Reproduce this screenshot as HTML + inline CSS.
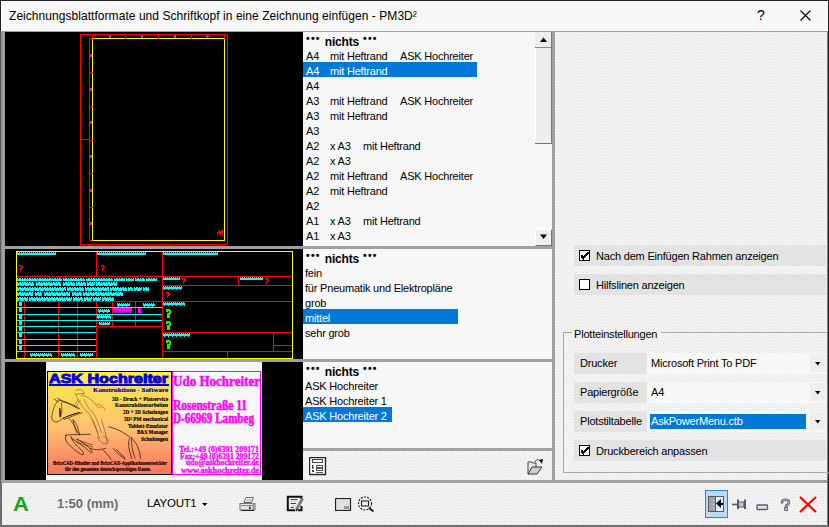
<!DOCTYPE html>
<html><head><meta charset="utf-8"><style>
*{box-sizing:border-box}
html,body{margin:0;padding:0;width:829px;height:527px;overflow:hidden;background:#1e1e1e;font-family:"Liberation Sans", sans-serif;}
.a{position:absolute}
.it{position:absolute;left:0;height:15px;width:240px;font-size:11px;line-height:15px;color:#000;white-space:pre;letter-spacing:-0.2px}
.it > span{top:2px!important}
.it > span.bd{top:3px!important}
.band{position:absolute;background:#e3e3e3;font-size:11px;line-height:21px;color:#000;white-space:pre;letter-spacing:-0.2px}
.lb{position:absolute;font-size:11px;line-height:15px;white-space:pre;letter-spacing:-0.2px;color:#000}
</style></head><body>
<div class="a" style="left:1px;top:1px;width:827px;height:30px;background:#f7f7f7"></div>
<div class="a" style="left:9px;top:8px;font-size:12px;line-height:16px;color:#000;white-space:pre;letter-spacing:0.05px">Zeichnungsblattformate und Schriftkopf in eine Zeichnung einfügen - PM3D²</div>
<div class="a" style="left:757px;top:7px;font-size:14px;line-height:16px;color:#000">?</div>
<svg class="a" style="left:800px;top:10px" width="11" height="11"><path d="M0.5 0.5 L10.5 10.5 M10.5 0.5 L0.5 10.5" stroke="#000" stroke-width="1.1"/></svg>
<div class="a" style="left:1px;top:31px;width:827px;height:1px;background:#a0a0a0"></div>
<svg class="a" style="left:1px;top:32px" width="826" height="495" shape-rendering="crispEdges"><defs><pattern id="tex" width="3" height="3" patternUnits="userSpaceOnUse"><rect width="3" height="3" fill="#f8f8f8"/><rect x="0" y="0" width="1" height="1" fill="#e6e6e6"/><rect x="1" y="1" width="1" height="1" fill="#e6e6e6"/><rect x="2" y="2" width="1" height="1" fill="#e6e6e6"/><rect x="2" y="0" width="1" height="1" fill="#f8e8ef"/><rect x="0" y="2" width="1" height="1" fill="#ecf6ec"/></pattern></defs><rect width="826" height="495" fill="url(#tex)"/></svg>
<div class="a" style="left:827px;top:31px;width:1px;height:496px;background:#808080"></div>
<!-- left frame -->
<div class="a" style="left:1px;top:32px;width:4px;height:451px;background:#a0a0a0"></div>
<div class="a" style="left:1px;top:32px;width:1px;height:451px;background:#8a8a8a"></div>
<div class="a" style="left:5px;top:32px;width:298px;height:448px;background:#000"></div>
<div class="a" style="left:303px;top:32px;width:249px;height:214px;background:#f7f7f7"></div>
<div class="a" style="left:303px;top:249px;width:249px;height:110px;background:#f7f7f7"></div>
<div class="a" style="left:303px;top:362px;width:249px;height:86px;background:#f7f7f7"></div>
<div class="a" style="left:303px;top:448px;width:249px;height:3px;background:#a0a0a0"></div>
<div class="a" style="left:1px;top:246px;width:554px;height:3px;background:#a0a0a0"></div>
<div class="a" style="left:1px;top:359px;width:554px;height:3px;background:#a0a0a0"></div>
<div class="a" style="left:1px;top:480px;width:826px;height:3px;background:#a0a0a0"></div>
<div class="a" style="left:552px;top:32px;width:3px;height:451px;background:#a0a0a0"></div>
<svg width="829" height="527" style="position:absolute;left:0;top:0" shape-rendering="crispEdges"><rect x="80" y="34" width="148" height="1" fill="#ff0000"/><rect x="80" y="244" width="148" height="1" fill="#ff0000"/><rect x="80" y="34" width="1" height="211" fill="#ff0000"/><rect x="227" y="34" width="1" height="211" fill="#ff0000"/><rect x="89" y="38" width="1" height="203" fill="#ff0000"/><rect x="89" y="38" width="4" height="1" fill="#ff0000"/><rect x="89" y="240" width="4" height="1" fill="#ff0000"/><rect x="92" y="38" width="133" height="1" fill="#ffff00"/><rect x="92" y="240" width="133" height="1" fill="#ffff00"/><rect x="92" y="38" width="1" height="203" fill="#ffff00"/><rect x="224" y="38" width="1" height="203" fill="#ffff00"/><rect x="92" y="34" width="1" height="5" fill="#ff0000"/><rect x="125" y="34" width="1" height="5" fill="#ff0000"/><rect x="158" y="34" width="1" height="5" fill="#ff0000"/><rect x="191" y="34" width="1" height="5" fill="#ff0000"/><rect x="224" y="34" width="1" height="5" fill="#ff0000"/><rect x="109" y="35" width="2" height="3" fill="#ff00ff"/><rect x="141" y="35" width="2" height="3" fill="#ff00ff"/><rect x="174" y="35" width="2" height="3" fill="#ff00ff"/><rect x="207" y="35" width="1" height="3" fill="#ff00ff"/><rect x="206" y="36" width="3" height="1" fill="#ff00ff"/><rect x="89" y="72" width="4" height="1" fill="#ff0000"/><rect x="89" y="106" width="4" height="1" fill="#ff0000"/><rect x="89" y="140" width="4" height="1" fill="#ff0000"/><rect x="89" y="173" width="4" height="1" fill="#ff0000"/><rect x="89" y="207" width="4" height="1" fill="#ff0000"/><rect x="90" y="54" width="2" height="3" fill="#ff00ff"/><rect x="90" y="88" width="2" height="3" fill="#ff00ff"/><rect x="90" y="121" width="2" height="3" fill="#ff00ff"/><rect x="90" y="155" width="2" height="3" fill="#ff00ff"/><rect x="90" y="189" width="2" height="3" fill="#ff00ff"/><rect x="90" y="222" width="2" height="3" fill="#ff00ff"/><rect x="80" y="139" width="10" height="1" fill="#ff0000"/><rect x="219" y="230" width="1" height="1" fill="#ff0000"/><rect x="221" y="230" width="1" height="1" fill="#ff0000"/><rect x="222" y="230" width="1" height="1" fill="#ff0000"/><rect x="218" y="231" width="1" height="1" fill="#ff0000"/><rect x="219" y="231" width="1" height="1" fill="#ff0000"/><rect x="221" y="231" width="1" height="1" fill="#ff0000"/><rect x="222" y="231" width="1" height="1" fill="#ff0000"/><rect x="217" y="232" width="1" height="1" fill="#ff0000"/><rect x="218" y="232" width="1" height="1" fill="#ff0000"/><rect x="219" y="232" width="1" height="1" fill="#ff0000"/><rect x="220" y="232" width="1" height="1" fill="#ff0000"/><rect x="221" y="232" width="1" height="1" fill="#ff0000"/><rect x="222" y="232" width="1" height="1" fill="#ff0000"/><rect x="217" y="233" width="1" height="1" fill="#ff0000"/><rect x="219" y="233" width="1" height="1" fill="#ff0000"/><rect x="220" y="233" width="1" height="1" fill="#ff0000"/><rect x="222" y="233" width="1" height="1" fill="#ff0000"/><rect x="217" y="234" width="1" height="1" fill="#ff0000"/><rect x="220" y="234" width="1" height="1" fill="#ff0000"/><rect x="222" y="234" width="1" height="1" fill="#ff0000"/><rect x="16" y="251" width="277" height="1" fill="#ffff00"/><rect x="16" y="358" width="277" height="1" fill="#ffff00"/><rect x="16" y="251" width="1" height="108" fill="#ffff00"/><rect x="292" y="251" width="1" height="108" fill="#ffff00"/><rect x="96" y="252" width="1" height="25" fill="#ff0000"/><rect x="162" y="252" width="1" height="106" fill="#ff0000"/><rect x="17" y="276" width="275" height="1" fill="#ff0000"/><rect x="162" y="285" width="130" height="1" fill="#ff0000"/><rect x="238" y="276" width="1" height="10" fill="#ff0000"/><rect x="17" y="301" width="275" height="1" fill="#ff0000"/><rect x="162" y="332" width="130" height="1" fill="#ff0000"/><rect x="273" y="332" width="1" height="20" fill="#ff0000"/><rect x="273" y="345" width="19" height="1" fill="#ff0000"/><rect x="162" y="351" width="130" height="1" fill="#ff0000"/><rect x="227" y="351" width="1" height="7" fill="#ff0000"/><rect x="24" y="301" width="1" height="57" fill="#ff0000"/><rect x="58" y="301" width="1" height="57" fill="#ff0000"/><rect x="77" y="301" width="1" height="57" fill="#ff0000"/><rect x="96" y="301" width="1" height="57" fill="#ff0000"/><rect x="17" y="307" width="79" height="1" fill="#00ffff"/><rect x="17" y="314" width="79" height="1" fill="#00ffff"/><rect x="17" y="320" width="79" height="1" fill="#00ffff"/><rect x="17" y="326" width="79" height="1" fill="#00ffff"/><rect x="17" y="332" width="79" height="1" fill="#00ffff"/><rect x="17" y="339" width="79" height="1" fill="#00ffff"/><rect x="17" y="345" width="79" height="1" fill="#00ffff"/><rect x="17" y="351" width="79" height="1" fill="#00ffff"/><rect x="112" y="301" width="1" height="26" fill="#ff0000"/><rect x="135" y="301" width="1" height="26" fill="#ff0000"/><rect x="96" y="326" width="67" height="1" fill="#ff0000"/><defs><pattern id="ptx" x="0" y="0" width="4" height="4" patternUnits="userSpaceOnUse"><rect x="0" y="1" width="4" height="2" fill="#00ffff"/><rect x="0" y="0" width="1" height="1" fill="#00ffff"/><rect x="2" y="0" width="1" height="1" fill="#00ffff"/><rect x="1" y="3" width="1" height="1" fill="#00ffff"/></pattern><pattern id="ptl" x="0" y="0" width="5" height="4" patternUnits="userSpaceOnUse"><rect x="0" y="0" width="5" height="4" fill="#00ffff"/><rect x="1" y="0" width="1" height="1" fill="#000"/><rect x="4" y="0" width="1" height="1" fill="#000"/><rect x="2" y="3" width="1" height="1" fill="#000"/></pattern></defs><g transform="translate(17,252)"><rect x="0" y="0" width="39" height="3" fill="url(#ptx)"/></g><g transform="translate(97,252)"><rect x="0" y="0" width="49" height="3" fill="url(#ptx)"/></g><g transform="translate(163,252)"><rect x="0" y="0" width="55" height="3" fill="url(#ptx)"/></g><g transform="translate(17,278)"><rect x="0" y="0" width="45" height="3" fill="url(#ptl)"/></g><g transform="translate(63,278)"><rect x="0" y="0" width="22" height="3" fill="url(#ptl)"/></g><g transform="translate(86,278)"><rect x="0" y="0" width="27" height="3" fill="url(#ptl)"/></g><g transform="translate(114,278)"><rect x="0" y="0" width="11" height="3" fill="url(#ptl)"/></g><g transform="translate(126,278)"><rect x="0" y="0" width="8" height="3" fill="url(#ptl)"/></g><g transform="translate(135,278)"><rect x="0" y="0" width="10" height="3" fill="url(#ptl)"/></g><g transform="translate(146,278)"><rect x="0" y="0" width="11" height="3" fill="url(#ptl)"/></g><g transform="translate(17,282)"><rect x="0" y="0" width="17" height="4" fill="url(#ptl)"/></g><g transform="translate(36,282)"><rect x="0" y="0" width="25" height="4" fill="url(#ptl)"/></g><g transform="translate(63,282)"><rect x="0" y="0" width="12" height="4" fill="url(#ptl)"/></g><g transform="translate(76,282)"><rect x="0" y="0" width="10" height="4" fill="url(#ptl)"/></g><g transform="translate(87,282)"><rect x="0" y="0" width="8" height="4" fill="url(#ptl)"/></g><g transform="translate(96,282)"><rect x="0" y="0" width="21" height="4" fill="url(#ptl)"/></g><g transform="translate(17,287)"><rect x="0" y="0" width="49" height="4" fill="url(#ptl)"/></g><g transform="translate(67,287)"><rect x="0" y="0" width="17" height="4" fill="url(#ptl)"/></g><g transform="translate(85,287)"><rect x="0" y="0" width="24" height="4" fill="url(#ptl)"/></g><g transform="translate(110,287)"><rect x="0" y="0" width="17" height="4" fill="url(#ptl)"/></g><g transform="translate(128,287)"><rect x="0" y="0" width="5" height="4" fill="url(#ptl)"/></g><g transform="translate(134,287)"><rect x="0" y="0" width="8" height="4" fill="url(#ptl)"/></g><g transform="translate(143,287)"><rect x="0" y="0" width="6" height="4" fill="url(#ptl)"/></g><g transform="translate(17,292)"><rect x="0" y="0" width="16" height="4" fill="url(#ptl)"/></g><g transform="translate(35,292)"><rect x="0" y="0" width="7" height="4" fill="url(#ptl)"/></g><g transform="translate(44,292)"><rect x="0" y="0" width="26" height="4" fill="url(#ptl)"/></g><g transform="translate(72,292)"><rect x="0" y="0" width="10" height="4" fill="url(#ptl)"/></g><g transform="translate(83,292)"><rect x="0" y="0" width="40" height="4" fill="url(#ptl)"/></g><g transform="translate(17,297)"><rect x="0" y="0" width="11" height="4" fill="url(#ptl)"/></g><g transform="translate(29,297)"><rect x="0" y="0" width="43" height="4" fill="url(#ptl)"/></g><g transform="translate(73,297)"><rect x="0" y="0" width="10" height="4" fill="url(#ptl)"/></g><g transform="translate(84,297)"><rect x="0" y="0" width="8" height="4" fill="url(#ptl)"/></g><g transform="translate(93,297)"><rect x="0" y="0" width="8" height="4" fill="url(#ptl)"/></g><g transform="translate(102,297)"><rect x="0" y="0" width="12" height="4" fill="url(#ptl)"/></g><g transform="translate(163,277)"><rect x="0" y="0" width="17" height="3" fill="url(#ptx)"/></g><g transform="translate(240,277)"><rect x="0" y="0" width="23" height="3" fill="url(#ptx)"/></g><g transform="translate(163,286)"><rect x="0" y="0" width="19" height="4" fill="url(#ptx)"/></g><g transform="translate(163,302)"><rect x="0" y="0" width="22" height="4" fill="url(#ptx)"/></g><g transform="translate(163,333)"><rect x="0" y="0" width="27" height="4" fill="url(#ptx)"/></g><g transform="translate(117,303)"><rect x="0" y="0" width="13" height="4" fill="url(#ptx)"/></g><g transform="translate(143,303)"><rect x="0" y="0" width="12" height="4" fill="url(#ptx)"/></g><g transform="translate(98,309)"><rect x="0" y="0" width="12" height="4" fill="url(#ptx)"/></g><g transform="translate(97,315)"><rect x="0" y="0" width="14" height="4" fill="url(#ptx)"/></g><g transform="translate(99,322)"><rect x="0" y="0" width="11" height="3" fill="url(#ptx)"/></g><g transform="translate(30,353)"><rect x="0" y="0" width="22" height="4" fill="url(#ptx)"/></g><g transform="translate(61,353)"><rect x="0" y="0" width="14" height="4" fill="url(#ptx)"/></g><g transform="translate(80,353)"><rect x="0" y="0" width="13" height="4" fill="url(#ptx)"/></g><rect x="19" y="302" width="3" height="4" fill="#00ffff"/><rect x="19" y="308" width="3" height="4" fill="#00ffff"/><rect x="19" y="315" width="3" height="4" fill="#00ffff"/><rect x="19" y="321" width="3" height="4" fill="#00ffff"/><rect x="19" y="327" width="3" height="4" fill="#00ffff"/><rect x="19" y="333" width="3" height="4" fill="#00ffff"/><rect x="19" y="340" width="3" height="4" fill="#00ffff"/><rect x="19" y="346" width="3" height="4" fill="#00ffff"/><rect x="96" y="307" width="66" height="1" fill="#00ffff"/><rect x="96" y="314" width="66" height="1" fill="#00ffff"/><rect x="96" y="320" width="66" height="1" fill="#00ffff"/><rect x="113" y="308" width="19" height="3" fill="#ff00ff"/><rect x="113" y="311" width="19" height="2" fill="#a000a0"/><rect x="138" y="308" width="3" height="5" fill="#ff00ff"/><rect x="19" y="265" width="1" height="1" fill="#ff0000"/><rect x="20" y="265" width="1" height="1" fill="#ff0000"/><rect x="21" y="265" width="1" height="1" fill="#ff0000"/><rect x="19" y="266" width="1" height="1" fill="#ff0000"/><rect x="21" y="266" width="1" height="1" fill="#ff0000"/><rect x="22" y="266" width="1" height="1" fill="#ff0000"/><rect x="21" y="267" width="1" height="1" fill="#ff0000"/><rect x="22" y="267" width="1" height="1" fill="#ff0000"/><rect x="20" y="268" width="1" height="1" fill="#ff0000"/><rect x="21" y="268" width="1" height="1" fill="#ff0000"/><rect x="20" y="269" width="1" height="1" fill="#ff0000"/><rect x="20" y="270" width="1" height="1" fill="#ff0000"/><rect x="101" y="265" width="1" height="1" fill="#ff0000"/><rect x="102" y="265" width="1" height="1" fill="#ff0000"/><rect x="103" y="265" width="1" height="1" fill="#ff0000"/><rect x="101" y="266" width="1" height="1" fill="#ff0000"/><rect x="103" y="266" width="1" height="1" fill="#ff0000"/><rect x="104" y="266" width="1" height="1" fill="#ff0000"/><rect x="103" y="267" width="1" height="1" fill="#ff0000"/><rect x="104" y="267" width="1" height="1" fill="#ff0000"/><rect x="102" y="268" width="1" height="1" fill="#ff0000"/><rect x="103" y="268" width="1" height="1" fill="#ff0000"/><rect x="102" y="269" width="1" height="1" fill="#ff0000"/><rect x="102" y="270" width="1" height="1" fill="#ff0000"/><rect x="182" y="278" width="1" height="1" fill="#ff0000"/><rect x="183" y="278" width="1" height="1" fill="#ff0000"/><rect x="184" y="278" width="1" height="1" fill="#ff0000"/><rect x="182" y="279" width="1" height="1" fill="#ff0000"/><rect x="184" y="279" width="1" height="1" fill="#ff0000"/><rect x="185" y="279" width="1" height="1" fill="#ff0000"/><rect x="184" y="280" width="1" height="1" fill="#ff0000"/><rect x="185" y="280" width="1" height="1" fill="#ff0000"/><rect x="183" y="281" width="1" height="1" fill="#ff0000"/><rect x="184" y="281" width="1" height="1" fill="#ff0000"/><rect x="183" y="282" width="1" height="1" fill="#ff0000"/><rect x="183" y="283" width="1" height="1" fill="#ff0000"/><rect x="265" y="278" width="1" height="1" fill="#ff0000"/><rect x="266" y="278" width="1" height="1" fill="#ff0000"/><rect x="267" y="278" width="1" height="1" fill="#ff0000"/><rect x="265" y="279" width="1" height="1" fill="#ff0000"/><rect x="267" y="279" width="1" height="1" fill="#ff0000"/><rect x="268" y="279" width="1" height="1" fill="#ff0000"/><rect x="267" y="280" width="1" height="1" fill="#ff0000"/><rect x="268" y="280" width="1" height="1" fill="#ff0000"/><rect x="266" y="281" width="1" height="1" fill="#ff0000"/><rect x="267" y="281" width="1" height="1" fill="#ff0000"/><rect x="266" y="282" width="1" height="1" fill="#ff0000"/><rect x="266" y="283" width="1" height="1" fill="#ff0000"/><rect x="166" y="292" width="1" height="1" fill="#ff0000"/><rect x="167" y="292" width="1" height="1" fill="#ff0000"/><rect x="168" y="292" width="1" height="1" fill="#ff0000"/><rect x="166" y="293" width="1" height="1" fill="#ff0000"/><rect x="168" y="293" width="1" height="1" fill="#ff0000"/><rect x="169" y="293" width="1" height="1" fill="#ff0000"/><rect x="168" y="294" width="1" height="1" fill="#ff0000"/><rect x="169" y="294" width="1" height="1" fill="#ff0000"/><rect x="167" y="295" width="1" height="1" fill="#ff0000"/><rect x="168" y="295" width="1" height="1" fill="#ff0000"/><rect x="167" y="296" width="1" height="1" fill="#ff0000"/><rect x="167" y="297" width="1" height="1" fill="#ff0000"/><rect x="166" y="309" width="1" height="1" fill="#00ff00"/><rect x="167" y="309" width="1" height="1" fill="#00ff00"/><rect x="168" y="309" width="1" height="1" fill="#00ff00"/><rect x="169" y="309" width="1" height="1" fill="#00ff00"/><rect x="166" y="310" width="1" height="1" fill="#00ff00"/><rect x="167" y="310" width="1" height="1" fill="#00ff00"/><rect x="168" y="310" width="1" height="1" fill="#00ff00"/><rect x="169" y="310" width="1" height="1" fill="#00ff00"/><rect x="170" y="310" width="1" height="1" fill="#00ff00"/><rect x="166" y="311" width="1" height="1" fill="#00ff00"/><rect x="167" y="311" width="1" height="1" fill="#00ff00"/><rect x="169" y="311" width="1" height="1" fill="#00ff00"/><rect x="170" y="311" width="1" height="1" fill="#00ff00"/><rect x="169" y="312" width="1" height="1" fill="#00ff00"/><rect x="170" y="312" width="1" height="1" fill="#00ff00"/><rect x="167" y="313" width="1" height="1" fill="#00ff00"/><rect x="168" y="313" width="1" height="1" fill="#00ff00"/><rect x="169" y="313" width="1" height="1" fill="#00ff00"/><rect x="170" y="313" width="1" height="1" fill="#00ff00"/><rect x="167" y="314" width="1" height="1" fill="#00ff00"/><rect x="168" y="314" width="1" height="1" fill="#00ff00"/><rect x="169" y="314" width="1" height="1" fill="#00ff00"/><rect x="167" y="315" width="1" height="1" fill="#00ff00"/><rect x="168" y="315" width="1" height="1" fill="#00ff00"/><rect x="169" y="315" width="1" height="1" fill="#00ff00"/><rect x="167" y="316" width="1" height="1" fill="#00ff00"/><rect x="168" y="316" width="1" height="1" fill="#00ff00"/><rect x="169" y="316" width="1" height="1" fill="#00ff00"/><rect x="167" y="317" width="1" height="1" fill="#00ff00"/><rect x="168" y="317" width="1" height="1" fill="#00ff00"/><rect x="169" y="317" width="1" height="1" fill="#00ff00"/><rect x="166" y="321" width="1" height="1" fill="#00ff00"/><rect x="167" y="321" width="1" height="1" fill="#00ff00"/><rect x="168" y="321" width="1" height="1" fill="#00ff00"/><rect x="169" y="321" width="1" height="1" fill="#00ff00"/><rect x="166" y="322" width="1" height="1" fill="#00ff00"/><rect x="167" y="322" width="1" height="1" fill="#00ff00"/><rect x="168" y="322" width="1" height="1" fill="#00ff00"/><rect x="169" y="322" width="1" height="1" fill="#00ff00"/><rect x="170" y="322" width="1" height="1" fill="#00ff00"/><rect x="166" y="323" width="1" height="1" fill="#00ff00"/><rect x="167" y="323" width="1" height="1" fill="#00ff00"/><rect x="169" y="323" width="1" height="1" fill="#00ff00"/><rect x="170" y="323" width="1" height="1" fill="#00ff00"/><rect x="169" y="324" width="1" height="1" fill="#00ff00"/><rect x="170" y="324" width="1" height="1" fill="#00ff00"/><rect x="167" y="325" width="1" height="1" fill="#00ff00"/><rect x="168" y="325" width="1" height="1" fill="#00ff00"/><rect x="169" y="325" width="1" height="1" fill="#00ff00"/><rect x="170" y="325" width="1" height="1" fill="#00ff00"/><rect x="167" y="326" width="1" height="1" fill="#00ff00"/><rect x="168" y="326" width="1" height="1" fill="#00ff00"/><rect x="169" y="326" width="1" height="1" fill="#00ff00"/><rect x="167" y="327" width="1" height="1" fill="#00ff00"/><rect x="168" y="327" width="1" height="1" fill="#00ff00"/><rect x="169" y="327" width="1" height="1" fill="#00ff00"/><rect x="167" y="328" width="1" height="1" fill="#00ff00"/><rect x="168" y="328" width="1" height="1" fill="#00ff00"/><rect x="169" y="328" width="1" height="1" fill="#00ff00"/><rect x="167" y="329" width="1" height="1" fill="#00ff00"/><rect x="168" y="329" width="1" height="1" fill="#00ff00"/><rect x="169" y="329" width="1" height="1" fill="#00ff00"/><rect x="166" y="340" width="1" height="1" fill="#00ff00"/><rect x="167" y="340" width="1" height="1" fill="#00ff00"/><rect x="168" y="340" width="1" height="1" fill="#00ff00"/><rect x="169" y="340" width="1" height="1" fill="#00ff00"/><rect x="166" y="341" width="1" height="1" fill="#00ff00"/><rect x="167" y="341" width="1" height="1" fill="#00ff00"/><rect x="168" y="341" width="1" height="1" fill="#00ff00"/><rect x="169" y="341" width="1" height="1" fill="#00ff00"/><rect x="170" y="341" width="1" height="1" fill="#00ff00"/><rect x="166" y="342" width="1" height="1" fill="#00ff00"/><rect x="167" y="342" width="1" height="1" fill="#00ff00"/><rect x="169" y="342" width="1" height="1" fill="#00ff00"/><rect x="170" y="342" width="1" height="1" fill="#00ff00"/><rect x="169" y="343" width="1" height="1" fill="#00ff00"/><rect x="170" y="343" width="1" height="1" fill="#00ff00"/><rect x="167" y="344" width="1" height="1" fill="#00ff00"/><rect x="168" y="344" width="1" height="1" fill="#00ff00"/><rect x="169" y="344" width="1" height="1" fill="#00ff00"/><rect x="170" y="344" width="1" height="1" fill="#00ff00"/><rect x="167" y="345" width="1" height="1" fill="#00ff00"/><rect x="168" y="345" width="1" height="1" fill="#00ff00"/><rect x="169" y="345" width="1" height="1" fill="#00ff00"/><rect x="167" y="346" width="1" height="1" fill="#00ff00"/><rect x="168" y="346" width="1" height="1" fill="#00ff00"/><rect x="169" y="346" width="1" height="1" fill="#00ff00"/><rect x="167" y="347" width="1" height="1" fill="#00ff00"/><rect x="168" y="347" width="1" height="1" fill="#00ff00"/><rect x="169" y="347" width="1" height="1" fill="#00ff00"/><rect x="167" y="348" width="1" height="1" fill="#00ff00"/><rect x="168" y="348" width="1" height="1" fill="#00ff00"/><rect x="169" y="348" width="1" height="1" fill="#00ff00"/></svg>
<svg width="829" height="527" style="position:absolute;left:0;top:0"><rect x="46" y="362" width="216" height="118" fill="#f6f6f6"/><defs><linearGradient id="lg" x1="0" y1="0" x2="0" y2="1"><stop offset="0" stop-color="#ffee44"/><stop offset="0.55" stop-color="#ffc070"/><stop offset="1" stop-color="#ff7060"/></linearGradient></defs><rect x="47" y="371" width="124" height="104" fill="url(#lg)"/><rect x="47.5" y="371.5" width="124" height="103" fill="none" stroke="#000" stroke-width="1"/><rect x="172.5" y="371.5" width="88" height="103" fill="none" stroke="#ff00ff" stroke-width="1"/><text x="49" y="383" font-family="Liberation Sans" font-weight="bold" font-size="12.5" fill="#0000e6" stroke="#0000e6" stroke-width="0.9" textLength="119" lengthAdjust="spacingAndGlyphs">ASK Hochreiter</text><rect x="49" y="384" width="120" height="2" fill="#0000d0"/><text x="168" y="392" text-anchor="end" font-family="Liberation Serif" font-weight="bold" font-size="6.5" fill="#0000c8" stroke="#0000c8" stroke-width="0.2" textLength="75" lengthAdjust="spacingAndGlyphs">Konstruktions - Software</text><text x="168" y="400.5" text-anchor="end" font-family="Liberation Serif" font-weight="bold" font-size="6" fill="#000" stroke="#000" stroke-width="0.15" textLength="56" lengthAdjust="spacingAndGlyphs">3D - Druck + Plotservice</text><text x="168" y="407.25" text-anchor="end" font-family="Liberation Serif" font-weight="bold" font-size="6" fill="#000" stroke="#000" stroke-width="0.15" textLength="53" lengthAdjust="spacingAndGlyphs">Konstruktionsarbeiten</text><text x="168" y="414.0" text-anchor="end" font-family="Liberation Serif" font-weight="bold" font-size="6" fill="#000" stroke="#000" stroke-width="0.15" textLength="45" lengthAdjust="spacingAndGlyphs">2D + 3D Schulungen</text><text x="168" y="420.75" text-anchor="end" font-family="Liberation Serif" font-weight="bold" font-size="6" fill="#000" stroke="#000" stroke-width="0.15" textLength="44" lengthAdjust="spacingAndGlyphs">3D² PM mechanical</text><text x="168" y="427.5" text-anchor="end" font-family="Liberation Serif" font-weight="bold" font-size="6" fill="#000" stroke="#000" stroke-width="0.15" textLength="40" lengthAdjust="spacingAndGlyphs">Tablett-Emulator</text><text x="168" y="434.25" text-anchor="end" font-family="Liberation Serif" font-weight="bold" font-size="6" fill="#000" stroke="#000" stroke-width="0.15" textLength="31" lengthAdjust="spacingAndGlyphs">B&amp;S Manager</text><text x="168" y="441.0" text-anchor="end" font-family="Liberation Serif" font-weight="bold" font-size="6" fill="#000" stroke="#000" stroke-width="0.15" textLength="27" lengthAdjust="spacingAndGlyphs">Schulungen</text><text x="53" y="464.5" font-family="Liberation Serif" font-weight="bold" font-size="5.2" fill="#200000" stroke="#200000" stroke-width="0.2" textLength="114" lengthAdjust="spacingAndGlyphs">BricsCAD-Händler und BricsCAD-Applikationsentwickler</text><text x="65" y="470.8" font-family="Liberation Serif" font-weight="bold" font-size="5.2" fill="#200000" stroke="#200000" stroke-width="0.2" textLength="86" lengthAdjust="spacingAndGlyphs">für den gesamten deutschsprachigen Raum.</text><g transform="translate(48,385) scale(0.09497)" fill="none" stroke="#2a1808" stroke-width="7" stroke-linecap="round" stroke-linejoin="round"><path d="M65,150 L112,178 M100,138 L152,168"/><path d="M95,175 C70,210 50,260 40,330 C38,360 50,380 75,390 C100,395 130,370 160,350"/><path d="M140,190 C150,240 150,290 130,340"/><path d="M125,250 L128,330" stroke-width="16"/><path d="M160,350 C200,330 260,310 330,290" stroke-width="11"/><path d="M170,362 C230,342 290,312 360,292"/><path d="M110,160 C180,170 250,200 335,250"/><path d="M150,175 C210,190 260,215 320,250"/><path d="M220,352 C250,382 280,422 300,500"/><path d="M262,362 C300,402 320,452 330,527"/></g><g transform="translate(48,385) scale(0.09497)" fill="none" stroke="#5a4028" stroke-width="5" stroke-linecap="round" stroke-linejoin="round"><path d="M290,62 C300,42 360,42 375,70 C380,90 370,110 350,115"/><path d="M280,95 L380,90"/><path d="M300,100 C300,130 310,150 320,160"/><path d="M375,110 C420,130 470,160 500,200 C520,230 540,260 560,232"/><path d="M320,150 C300,180 280,210 270,232"/><path d="M340,160 C320,190 300,220 290,240"/><path d="M330,172 C360,222 380,262 420,292"/><path d="M380,150 C400,200 420,240 460,280"/><path d="M430,292 C460,352 490,422 520,500"/><path d="M470,282 C510,352 540,422 560,500"/><path d="M520,200 C560,210 590,230 600,262"/></g><g transform="translate(60,420) scale(0.10858)" fill="none" stroke="#2a1808" stroke-width="7" stroke-linecap="round" stroke-linejoin="round"><path d="M120,0 C130,60 150,100 180,132"/><path d="M50,140 C100,128 200,140 280,130"/><path d="M60,142 C38,162 48,202 100,242 C140,282 180,312 212,322 C228,302 205,282 172,252 C140,222 110,190 100,150"/><path d="M110,170 C150,200 220,240 260,280 C280,300 300,310 295,290 C280,260 230,220 160,175"/><path d="M150,180 L300,230 M160,205 L300,250" stroke-width="5"/><path d="M280,262 C330,282 380,272 420,262"/><path d="M450,62 C530,82 600,122 650,162 C700,202 730,252 742,352"/><path d="M640,172 C620,222 640,292 660,352"/><path d="M662,162 C652,232 672,302 692,352"/><path d="M400,280 C420,300 450,330 470,362"/><path d="M490,262 C520,302 560,332 600,362"/><path d="M520,272 L600,352"/></g><g transform="translate(60,420) scale(0.10858)" fill="none" stroke="#5a4028" stroke-width="5" stroke-linecap="round" stroke-linejoin="round"><path d="M300,0 C330,60 350,120 362,172"/><path d="M382,0 C402,60 422,120 432,202"/><path d="M345,160 C360,200 400,230 440,215 C450,180 430,160 400,150"/></g><text x="173" y="385.5" font-family="Liberation Serif" font-weight="bold" font-size="14" fill="#ff00ff" stroke="#ff00ff" stroke-width="0.5" textLength="87" lengthAdjust="spacingAndGlyphs">Udo Hochreiter</text><text x="173" y="410" font-family="Liberation Serif" font-weight="bold" font-size="14" fill="#ff00ff" stroke="#ff00ff" stroke-width="0.5" textLength="74" lengthAdjust="spacingAndGlyphs">Rosenstraße 11</text><text x="173" y="423" font-family="Liberation Serif" font-weight="bold" font-size="14" fill="#ff00ff" stroke="#ff00ff" stroke-width="0.5" textLength="81" lengthAdjust="spacingAndGlyphs">D-66969 Lambeg</text><text x="179" y="451.5" font-family="Liberation Serif" font-weight="bold" font-size="8" fill="#ff00ff" stroke="#ff00ff" stroke-width="0.3" textLength="80" lengthAdjust="spacingAndGlyphs">Tel.:+49 (0)6391 209171</text><text x="180" y="458.5" font-family="Liberation Serif" font-weight="bold" font-size="8" fill="#ff00ff" stroke="#ff00ff" stroke-width="0.3" textLength="79" lengthAdjust="spacingAndGlyphs">Fax:+49 (0)6391 209172</text><text x="186" y="465" font-family="Liberation Serif" font-weight="bold" font-size="8" fill="#ff00ff" stroke="#ff00ff" stroke-width="0.3" textLength="73" lengthAdjust="spacingAndGlyphs">udo@askhochreiter.de</text><text x="181" y="472.5" font-family="Liberation Serif" font-weight="bold" font-size="8" fill="#ff00ff" stroke="#ff00ff" stroke-width="0.3" textLength="78" lengthAdjust="spacingAndGlyphs">www.askhochreiter.de</text></svg>
<div class="a" style="left:303px;top:32px;width:232px;height:214px;overflow:hidden"><div class="it" style="top:0px;"><span class="bd" style="position:absolute;left:3px;top:0;font-weight:bold;font-size:12px;word-spacing:1px"><span style="position:relative;top:-4px;letter-spacing:1.2px;font-size:10.5px">•••</span> nichts <span style="position:relative;top:-4px;letter-spacing:1.2px;font-size:10.5px">•••</span></span></div><div class="it" style="top:15px;"><span style="position:absolute;left:3px;top:0">A4</span><span style="position:absolute;left:27px;top:0">mit Heftrand</span><span style="position:absolute;left:97px;top:0">ASK Hochreiter</span></div><div class="it" style="top:30px;width:174px;background:#0078d7;color:#fff;"><span style="position:absolute;left:3px;top:0">A4</span><span style="position:absolute;left:27px;top:0">mit Heftrand</span></div><div class="it" style="top:45px;"><span style="position:absolute;left:3px;top:0">A4</span></div><div class="it" style="top:60px;"><span style="position:absolute;left:3px;top:0">A3</span><span style="position:absolute;left:27px;top:0">mit Heftrand</span><span style="position:absolute;left:97px;top:0">ASK Hochreiter</span></div><div class="it" style="top:75px;"><span style="position:absolute;left:3px;top:0">A3</span><span style="position:absolute;left:27px;top:0">mit Heftrand</span></div><div class="it" style="top:90px;"><span style="position:absolute;left:3px;top:0">A3</span></div><div class="it" style="top:105px;"><span style="position:absolute;left:3px;top:0">A2</span><span style="position:absolute;left:27px;top:0">x A3</span><span style="position:absolute;left:60px;top:0">mit Heftrand</span></div><div class="it" style="top:120px;"><span style="position:absolute;left:3px;top:0">A2</span><span style="position:absolute;left:27px;top:0">x A3</span></div><div class="it" style="top:135px;"><span style="position:absolute;left:3px;top:0">A2</span><span style="position:absolute;left:27px;top:0">mit Heftrand</span><span style="position:absolute;left:97px;top:0">ASK Hochreiter</span></div><div class="it" style="top:150px;"><span style="position:absolute;left:3px;top:0">A2</span><span style="position:absolute;left:27px;top:0">mit Heftrand</span></div><div class="it" style="top:165px;"><span style="position:absolute;left:3px;top:0">A2</span></div><div class="it" style="top:180px;"><span style="position:absolute;left:3px;top:0">A1</span><span style="position:absolute;left:27px;top:0">x A3</span><span style="position:absolute;left:60px;top:0">mit Heftrand</span></div><div class="it" style="top:195px;"><span style="position:absolute;left:3px;top:0">A1</span><span style="position:absolute;left:27px;top:0">x A3</span></div></div>
<div class="a" style="left:303px;top:249px;width:249px;height:110px;overflow:hidden"><div class="it" style="top:0px;"><span class="bd" style="position:absolute;left:3px;top:0;font-weight:bold;font-size:12px;word-spacing:1px"><span style="position:relative;top:-4px;letter-spacing:1.2px;font-size:10.5px">•••</span> nichts <span style="position:relative;top:-4px;letter-spacing:1.2px;font-size:10.5px">•••</span></span></div><div class="it" style="top:15px;"><span style="position:absolute;left:2px;top:0">fein</span></div><div class="it" style="top:30px;"><span style="position:absolute;left:2px;top:0">für Pneumatik und Elektropläne</span></div><div class="it" style="top:45px;"><span style="position:absolute;left:2px;top:0">grob</span></div><div class="it" style="top:60px;width:155px;background:#0078d7;color:#fff;"><span style="position:absolute;left:2px;top:0">mittel</span></div><div class="it" style="top:75px;"><span style="position:absolute;left:2px;top:0">sehr grob</span></div></div>
<div class="a" style="left:303px;top:362px;width:249px;height:86px;overflow:hidden"><div class="it" style="top:0px;"><span class="bd" style="position:absolute;left:3px;top:0;font-weight:bold;font-size:12px;word-spacing:1px"><span style="position:relative;top:-4px;letter-spacing:1.2px;font-size:10.5px">•••</span> nichts <span style="position:relative;top:-4px;letter-spacing:1.2px;font-size:10.5px">•••</span></span></div><div class="it" style="top:15px;"><span style="position:absolute;left:2px;top:0">ASK Hochreiter</span></div><div class="it" style="top:30px;"><span style="position:absolute;left:2px;top:0">ASK Hochreiter 1</span></div><div class="it" style="top:45px;width:89px;background:#0078d7;color:#fff;"><span style="position:absolute;left:2px;top:0">ASK Hochreiter 2</span></div></div>
<!-- scrollbar -->
<div class="a" style="left:535px;top:32px;width:17px;height:214px;background:#f7f7f7"></div>
<div class="a" style="left:535px;top:32px;width:17px;height:112px;background:#eeeeee"></div>
<div class="a" style="left:535px;top:47px;width:17px;height:1px;background:#888"></div>
<div class="a" style="left:551px;top:32px;width:1px;height:112px;background:#777"></div>
<div class="a" style="left:535px;top:143px;width:17px;height:1px;background:#777"></div>
<div class="a" style="left:535px;top:48px;width:1px;height:95px;background:#fff"></div>
<div class="a" style="left:535px;top:229px;width:17px;height:17px;background:#eeeeee;border-right:1px solid #777;border-bottom:1px solid #777;border-top:1px solid #fff;border-left:1px solid #fff"></div>
<svg class="a" style="left:540px;top:37px" width="8" height="6"><path d="M0 5 L3.5 0.5 L7 5 Z" fill="#000"/></svg>
<svg class="a" style="left:540px;top:234px" width="8" height="6"><path d="M0 0.5 L3.5 5 L7 0.5 Z" fill="#000"/></svg>
<!-- list icons -->
<svg class="a" style="left:309px;top:457px" width="18" height="19">
 <rect x="0.5" y="0.5" width="16" height="17" fill="#fff" stroke="#222" stroke-width="1.4"/>
 <rect x="3.5" y="2.5" width="10" height="3" fill="#fff" stroke="#444"/>
 <rect x="3" y="8" width="1.5" height="4" fill="#444"/><rect x="3" y="13" width="2" height="2" fill="#444"/>
 <rect x="7.5" y="8.5" width="6" height="2" fill="#fff" stroke="#555"/><rect x="7.5" y="11.5" width="6" height="2" fill="#fff" stroke="#555"/><rect x="7" y="15" width="7" height="1" fill="#555"/>
</svg>
<svg class="a" style="left:527px;top:458px" width="18" height="18">
 <path d="M1 4 L5 4 L6 5 L9 5 L9 12 L1 16 Z" fill="#e8e8e8" stroke="#444" stroke-width="1"/>
 <path d="M1 16 L5 9 L15 9 L10 16 Z" fill="#cfcfcf" stroke="#333" stroke-width="1"/>
 <path d="M8 4 C9 1 12 1 13 3" fill="none" stroke="#444"/><path d="M12 2 L16 1 L15 6 Z" fill="#111"/>
</svg>
<!-- right panel -->
<div class="band" style="left:574px;top:245px;width:252px;height:21px"></div>
<div class="a" style="left:579px;top:250px;width:13px;height:13px"><svg width="11" height="11" style="position:absolute;left:0;top:0" shape-rendering="crispEdges"><rect x="0" y="0" width="11" height="11" fill="#000"/><rect x="1" y="1" width="9" height="9" fill="#fff"/><rect x="8" y="2" width="1" height="1" fill="#000"/><rect x="9" y="2" width="1" height="1" fill="#000"/><rect x="7" y="3" width="1" height="1" fill="#000"/><rect x="8" y="3" width="1" height="1" fill="#000"/><rect x="9" y="3" width="1" height="1" fill="#000"/><rect x="6" y="4" width="1" height="1" fill="#000"/><rect x="7" y="4" width="1" height="1" fill="#000"/><rect x="8" y="4" width="1" height="1" fill="#000"/><rect x="2" y="5" width="1" height="1" fill="#000"/><rect x="3" y="5" width="1" height="1" fill="#000"/><rect x="5" y="5" width="1" height="1" fill="#000"/><rect x="6" y="5" width="1" height="1" fill="#000"/><rect x="7" y="5" width="1" height="1" fill="#000"/><rect x="2" y="6" width="1" height="1" fill="#000"/><rect x="3" y="6" width="1" height="1" fill="#000"/><rect x="4" y="6" width="1" height="1" fill="#000"/><rect x="5" y="6" width="1" height="1" fill="#000"/><rect x="6" y="6" width="1" height="1" fill="#000"/><rect x="2" y="7" width="1" height="1" fill="#000"/><rect x="3" y="7" width="1" height="1" fill="#000"/><rect x="4" y="7" width="1" height="1" fill="#000"/><rect x="5" y="7" width="1" height="1" fill="#000"/><rect x="3" y="8" width="1" height="1" fill="#000"/><rect x="4" y="8" width="1" height="1" fill="#000"/><rect x="4" y="9" width="1" height="1" fill="#000"/></svg></div>
<div class="lb" style="left:596px;top:249px">Nach dem Einfügen Rahmen anzeigen</div>
<div class="band" style="left:574px;top:274px;width:252px;height:21px"></div>
<div class="a" style="left:579px;top:279px;width:13px;height:13px"><svg width="11" height="11" style="position:absolute;left:0;top:0" shape-rendering="crispEdges"><rect x="0" y="0" width="11" height="11" fill="#000"/><rect x="1" y="1" width="9" height="9" fill="#fff"/></svg></div>
<div class="lb" style="left:596px;top:278px">Hilfslinen anzeigen</div>
<!-- group -->
<div class="a" style="left:563px;top:332px;width:290px;height:141px;border:1px solid #a8a8a8;border-top:none"></div>
<div class="a" style="left:563px;top:332px;width:9px;height:1px;background:#a8a8a8"></div>
<div class="a" style="left:661px;top:332px;width:166px;height:1px;background:#a8a8a8"></div>

<div class="lb" style="left:574px;top:327px">Plotteinstellungen</div>
<div class="band" style="left:574px;top:353px;width:73px;height:21px;padding-left:6px">Drucker</div>
<div class="band" style="left:647px;top:353px;width:179px;height:21px;background:#f7f7f7;padding-left:4px">Microsoft Print To PDF</div>
<div class="band" style="left:574px;top:382px;width:73px;height:21px;padding-left:6px">Papiergröße</div>
<div class="band" style="left:647px;top:382px;width:179px;height:21px;background:#f7f7f7;padding-left:4px">A4</div>
<div class="band" style="left:574px;top:411px;width:73px;height:21px;padding-left:6px">Plotstiltabelle</div>
<div class="band" style="left:647px;top:411px;width:179px;height:21px;background:#f7f7f7"></div>
<div class="a" style="left:650px;top:414px;width:156px;height:15px;background:#0078d7;color:#fff;font-size:11px;line-height:15px;padding-left:1px;white-space:pre;letter-spacing:-0.2px">AskPowerMenu.ctb</div>
<div class="a" style="left:810px;top:354px;width:15px;height:18px;background:#eeeeee"></div>
<div class="a" style="left:810px;top:383px;width:15px;height:18px;background:#eeeeee"></div>
<div class="a" style="left:810px;top:412px;width:15px;height:18px;background:#eeeeee"></div>
<svg class="a" style="left:815px;top:362px" width="6" height="4"><path d="M0 0 L5.5 0 L2.75 3.5Z" fill="#000"/></svg>
<svg class="a" style="left:815px;top:391px" width="6" height="4"><path d="M0 0 L5.5 0 L2.75 3.5Z" fill="#000"/></svg>
<svg class="a" style="left:815px;top:420px" width="6" height="4"><path d="M0 0 L5.5 0 L2.75 3.5Z" fill="#000"/></svg>
<div class="band" style="left:574px;top:440px;width:252px;height:21px"></div>
<div class="a" style="left:579px;top:445px;width:13px;height:13px"><svg width="11" height="11" style="position:absolute;left:0;top:0" shape-rendering="crispEdges"><rect x="0" y="0" width="11" height="11" fill="#000"/><rect x="1" y="1" width="9" height="9" fill="#fff"/><rect x="8" y="2" width="1" height="1" fill="#000"/><rect x="9" y="2" width="1" height="1" fill="#000"/><rect x="7" y="3" width="1" height="1" fill="#000"/><rect x="8" y="3" width="1" height="1" fill="#000"/><rect x="9" y="3" width="1" height="1" fill="#000"/><rect x="6" y="4" width="1" height="1" fill="#000"/><rect x="7" y="4" width="1" height="1" fill="#000"/><rect x="8" y="4" width="1" height="1" fill="#000"/><rect x="2" y="5" width="1" height="1" fill="#000"/><rect x="3" y="5" width="1" height="1" fill="#000"/><rect x="5" y="5" width="1" height="1" fill="#000"/><rect x="6" y="5" width="1" height="1" fill="#000"/><rect x="7" y="5" width="1" height="1" fill="#000"/><rect x="2" y="6" width="1" height="1" fill="#000"/><rect x="3" y="6" width="1" height="1" fill="#000"/><rect x="4" y="6" width="1" height="1" fill="#000"/><rect x="5" y="6" width="1" height="1" fill="#000"/><rect x="6" y="6" width="1" height="1" fill="#000"/><rect x="2" y="7" width="1" height="1" fill="#000"/><rect x="3" y="7" width="1" height="1" fill="#000"/><rect x="4" y="7" width="1" height="1" fill="#000"/><rect x="5" y="7" width="1" height="1" fill="#000"/><rect x="3" y="8" width="1" height="1" fill="#000"/><rect x="4" y="8" width="1" height="1" fill="#000"/><rect x="4" y="9" width="1" height="1" fill="#000"/></svg></div>
<div class="lb" style="left:596px;top:444px">Druckbereich anpassen</div>
<!-- bottom toolbar -->
<div class="a" style="left:0px;top:483px;width:2px;height:44px;background:#6e6e6e"></div>
<div class="a" style="left:0px;top:31px;width:1px;height:452px;background:#5a5a5a"></div>
<div class="a" style="left:0px;top:525px;width:829px;height:2px;background:#6e6e6e"></div>
<div class="a" style="left:13px;top:494px;font-size:19.5px;line-height:20px;font-weight:bold;color:#16a31a;transform:scaleX(1.12);transform-origin:left top">A</div>
<div class="a" style="left:57px;top:496px;font-size:13px;line-height:16px;font-weight:bold;color:#6d6d6d;white-space:pre">1:50 (mm)</div>
<div class="a" style="left:147px;top:495px;font-size:11.5px;line-height:16px;color:#000;white-space:pre;letter-spacing:-0.3px">LAYOUT1</div>
<svg class="a" style="left:202px;top:503px" width="6" height="4"><path d="M0 0 L5.5 0 L2.75 3Z" fill="#000"/></svg>

<svg class="a" style="left:239px;top:496px" width="17" height="16">
 <path d="M7,1.5 L14.5,1.5 L12.5,6.5 L5,6.5 Z" fill="#f6f6f6" stroke="#666" stroke-width="1"/>
 <path d="M8,3.5 L12.5,3.5 M7.5,5 L12,5" stroke="#aaa" stroke-width="0.8"/>
 <rect x="1" y="7.5" width="15" height="6.5" fill="#e4e4e4" stroke="#666" stroke-width="0.9"/>
 <rect x="1.5" y="9" width="12" height="1" fill="#8a8a8a"/>
 <rect x="13.5" y="7.5" width="2.5" height="6.5" fill="#9a9a9a"/>
 <rect x="10" y="10.5" width="1.6" height="2.5" fill="#333"/>
 <rect x="2" y="14" width="13" height="1" fill="#223"/>
</svg>
<svg class="a" style="left:286px;top:495px" width="18" height="17">
 <path d="M15.5,4 L15.5,1.8 L1.8,1.8 L1.8,15.2 L9,15.2 M12,15.2 L15.5,15.2 L15.5,11" fill="none" stroke="#111" stroke-width="2"/>
 <path d="M4.5,4.5 L11.5,4.5 M4.5,8.5 L10,8.5 M4.5,12.5 L8,12.5" stroke="#444" stroke-width="1.2"/>
 <path d="M4.5,6.5 L11,6.5 M4.5,10.5 L10,10.5" stroke="#c8c8c8" stroke-width="0.8"/>
 <path d="M16.5,3.5 L10.5,14.5" stroke="#808080" stroke-width="3"/>
 <path d="M11.5,14 L9.8,16" stroke="#222" stroke-width="1.5"/>
</svg>
<svg class="a" style="left:335px;top:498px" width="17" height="13">
 <rect x="0.5" y="0.5" width="15" height="12" fill="#e0e0e0" stroke="#222" stroke-width="1.2"/>
 <rect x="9" y="8" width="5" height="3" fill="#999"/>
</svg>
<svg class="a" style="left:357px;top:496px" width="18" height="16">
 <circle cx="8" cy="7.5" r="6.5" fill="none" stroke="#111" stroke-width="1.1" stroke-dasharray="2 1.2"/>
 <rect x="4.5" y="5" width="7" height="5" fill="none" stroke="#222" stroke-width="1.1"/>
 <path d="M12 12 L16.5 15.5" stroke="#222" stroke-width="2"/>
</svg>
<div class="a" style="left:705px;top:490px;width:23px;height:28px;background:#bcdaf4;border:1px solid #2d7fe0"></div>
<svg class="a" style="left:708px;top:496px" width="17" height="17" shape-rendering="crispEdges">
 <rect x="0" y="0" width="16" height="16" fill="#5a5a66"/>
 <rect x="1" y="1" width="6" height="14" fill="#a4a4a4"/>
 <rect x="8" y="1" width="7" height="14" fill="#dcecfa"/>
 <rect x="5" y="4" width="1" height="1" fill="#e0e0e0"/><rect x="5" y="8" width="1" height="1" fill="#e0e0e0"/><rect x="5" y="12" width="1" height="1" fill="#e0e0e0"/>
 <path d="M8 7.5 L13 3 L13 12 Z" fill="#000" shape-rendering="auto"/><rect x="12" y="7" width="3" height="1.5" fill="#000"/>
</svg>
<svg class="a" style="left:732px;top:499px" width="15" height="11">
 <path d="M0 5.5 L6 5.5" stroke="#5a5a6a" stroke-width="1.6"/>
 <rect x="5" y="0.5" width="2" height="9.5" fill="#5a5a6a"/>
 <path d="M7 3 L12 3 L12 8 L7 8" fill="#c8c8d0" stroke="#5a5a6a" stroke-width="1.2"/>
 <rect x="12" y="0.5" width="2" height="9.5" fill="#5a5a6a"/>
</svg>
<svg class="a" style="left:756px;top:504px" width="13" height="7">
 <rect x="1" y="1" width="10.5" height="4.5" fill="#e4e4e8" stroke="#5a5a6a" stroke-width="1.3" rx="0.8"/>
</svg>
<svg class="a" style="left:780px;top:498px" width="11" height="13">
 <path d="M2 4.5 C2 0.8 9 0.8 9 4.5 C9 6.8 6 6.8 6 8.5" fill="none" stroke="#5a5a6a" stroke-width="2.6" stroke-linecap="round"/>
 <path d="M2 4.5 C2 0.8 9 0.8 9 4.5 C9 6.8 6 6.8 6 8.5" fill="none" stroke="#e8e8ec" stroke-width="0.8"/>
 <rect x="4.6" y="9.8" width="2.8" height="2.6" fill="#e8e8ec" stroke="#5a5a6a" stroke-width="1"/>
</svg>
<svg class="a" style="left:799px;top:496px" width="18" height="17">
 <path d="M1 1 L17 16 M17 1 L1 16" stroke="#ff0000" stroke-width="2.2"/>
</svg>
</body></html>
